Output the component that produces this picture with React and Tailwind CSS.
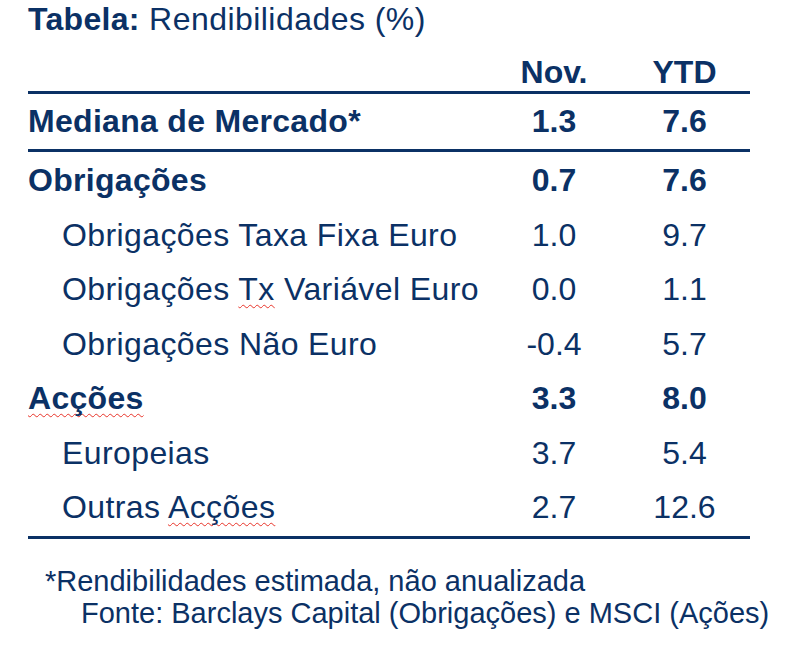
import React from "react";

const NAVY = "text-[#0b3165]";

function Wavy({ children }) {
  return (
    <span className="underline decoration-wavy decoration-[#e8342a] decoration-1 underline-offset-[4px] [text-decoration-skip-ink:none]">
      {children}
    </span>
  );
}

const rows = [
  { label: "Obrigações", nov: "0.7", ytd: "7.6", bold: true },
  { label: "Obrigações Taxa Fixa Euro", nov: "1.0", ytd: "9.7" },
  {
    label: (
      <>
        Obrigações <Wavy>Tx</Wavy> Variável Euro
      </>
    ),
    nov: "0.0",
    ytd: "1.1",
  },
  { label: "Obrigações Não Euro", nov: "-0.4", ytd: "5.7" },
  { label: <Wavy>Acções</Wavy>, nov: "3.3", ytd: "8.0", bold: true },
  { label: "Europeias", nov: "3.7", ytd: "5.4" },
  {
    label: (
      <>
        Outras <Wavy>Acções</Wavy>
      </>
    ),
    nov: "2.7",
    ytd: "12.6",
  },
];

export default function App() {
  return (
    <div
      className={`w-[791px] h-[650px] bg-white ${NAVY} overflow-hidden`}
      style={{ fontFamily: '"Liberation Sans", Arial, sans-serif' }}
    >
      <div className="pl-[28px] pr-[41px]">
        <div className="pt-[1px] text-[32px] leading-[36px] whitespace-nowrap tracking-[0.45px]">
          <span className="font-bold tracking-[0.3px]">Tabela:</span> Rendibilidades (%)
        </div>

        <div className="grid grid-cols-[461px_130px_131px] pt-[17px] pb-[1px] text-[32px] leading-[36px] font-bold">
          <div />
          <div className="text-center">Nov.</div>
          <div className="text-center">YTD</div>
        </div>

        <div className="h-[3px] bg-[#0b3165]" />

        <div className="grid grid-cols-[461px_130px_131px] h-[55px] text-[32px] leading-[55px] font-bold">
          <div className="whitespace-nowrap tracking-[0.3px]">Mediana de Mercado*</div>
          <div className="text-center">1.3</div>
          <div className="text-center">7.6</div>
        </div>

        <div className="h-[3px] bg-[#0b3165]" />

        <div className="pt-[1px] pb-[1.5px]">
          {rows.map((r, i) => (
            <div
              key={i}
              className={`grid grid-cols-[461px_130px_131px] h-[54.5px] text-[32px] leading-[54.5px] ${
                r.bold ? "font-bold" : "font-normal"
              }`}
            >
              <div
                className={`whitespace-nowrap ${
                  r.bold ? "tracking-[0.3px]" : "pl-[34px] tracking-[0.4px]"
                }`}
              >
                {r.label}
              </div>
              <div className="text-center">{r.nov}</div>
              <div className="text-center">{r.ytd}</div>
            </div>
          ))}
        </div>

        <div className="h-[3px] bg-[#0b3165]" />
      </div>

      <div className="mt-[26px] text-[29px] leading-[32px] whitespace-nowrap">
        <div className="pl-[45px]">*Rendibilidades estimada, não anualizada</div>
        <div className="pl-[81px]">
          Fonte: Barclays Capital (Obrigações) e MSCI (Ações)
        </div>
      </div>
    </div>
  );
}
